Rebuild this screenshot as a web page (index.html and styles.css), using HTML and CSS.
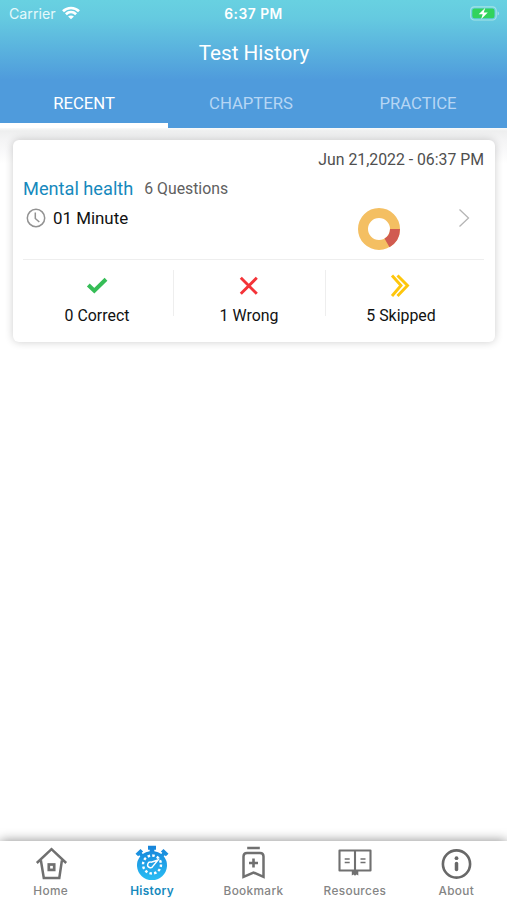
FILE: index.html
```html
<!DOCTYPE html>
<html lang="en">
<head>
<meta charset="utf-8">
<title>Test History</title>
<link rel="stylesheet" href="styles.css">
</head>
<body>
<div class="app">
  <header class="header">
    <div class="status">
      <div class="carrier"><span>Carrier</span>
        <svg width="18" height="14" viewBox="0 0 18 14" fill="none" stroke="#fff" stroke-width="2.700"><path d="M1 5.200C5.500.9 12.500.9 17 5.200M3.900 8.300c3-2.800 7.200-2.800 10.200 0"/><path d="M9 13.300 6.100 10.500C7.800 9 10.200 9 11.900 10.500Z" fill="#fff" stroke="none"/></svg>
      </div>
      <div class="time">6:37 PM</div>
      <svg class="battery" width="30" height="15" viewBox="0 0 30 15"><rect x=".6" y=".8" width="25.600" height="13.200" rx="3.700" fill="none" stroke="#a4e3e6" stroke-width="1.200"/><rect x="2.300" y="2.500" width="22.200" height="9.800" rx="2.200" fill="#32d35c"/><path d="M27.600 5.200v4.400q1.500-.7 1.500-2.200t-1.500-2.200Z" fill="#a4e3e6"/><path d="m15.300 1.800-6.600 6.500h4l-1.600 4.900 6.700-6.700h-4.100Z" fill="#fff"/></svg>
    </div>
    <h1 class="title">Test History</h1>
    <div class="tabs">
      <div class="tab active"><span>RECENT</span></div>
      <div class="tab"><span>CHAPTERS</span></div>
      <div class="tab"><span>PRACTICE</span></div>
    </div>
  </header>
  <main class="content">
    <section class="card">
      <div class="date"><span>Jun 21,2022 - 06:37 PM</span></div>
      <div class="summary">
        <div class="info">
          <div class="subject"><span class="name">Mental health</span><span class="count">6 Questions</span></div>
          <div class="duration"><svg width="20" height="20" viewBox="0 0 20 20" fill="none" stroke="#929292" stroke-width="1.500"><circle cx="10" cy="10" r="8.700"/><path d="M9.300 4.500v6l4 3.500"/></svg><span>01 Minute</span></div>
        </div>
        <svg class="donut" width="42" height="42" viewBox="0 0 42 42" fill="none" stroke-width="10"><circle cx="21" cy="21" r="16" stroke="#f4bf62"/><path d="M37 21A16 16 0 0 1 29 34.860" stroke="#d15b50"/></svg>
        <svg class="chevron" width="12" height="20" viewBox="0 0 12 20" fill="none" stroke="#b5b5b5" stroke-width="1.300"><path d="m1.500 1.500 9 8.500-9 8.500"/></svg>
      </div>
      <div class="results">
        <div class="result"><svg width="24" height="24" viewBox="0 0 24 24" fill="none" stroke="#36bd57" stroke-width="4"><path d="m3.300 11 6 5.700L21 5.300"/></svg><span>0 Correct</span></div>
        <div class="result"><svg width="24" height="24" viewBox="0 0 24 24" fill="none" stroke="#f43338" stroke-width="2.900"><path d="m3.800 3.800 16 16M19.800 3.800l-16 16"/></svg><span>1 Wrong</span></div>
        <div class="result"><svg width="24" height="24" viewBox="0 0 24 24" fill="none" stroke="#fec60c" stroke-width="2.900"><path d="m3 1.500 9 10L3 22M8.500 1.500l10 10-10 10.500"/></svg><span>5 Skipped</span></div>
      </div>
    </section>
  </main>
  <nav class="nav">
    <div class="item"><svg width="36" height="36" viewBox="0 0 36 36" fill="none" stroke="#707070" stroke-width="2.500"><path d="M3.800 18 18.500 4.200 33.200 18M7.900 15.500 10.800 32.900H26.300L28.900 15.500"/><rect x="15.800" y="19.500" width="5.400" height="5.400" stroke-width="2.700"/></svg><span>Home</span></div>
    <div class="item selected"><svg width="36" height="36" viewBox="0 0 36 36"><defs><linearGradient id="watch" x1="0" y1="0" x2="0" y2="1"><stop stop-color="#1683d9"/><stop offset="1" stop-color="#29bdf4"/></linearGradient></defs><path fill="url(#watch)" d="M14 .8h8v4h-1.700v1.500q4 .6 7 2.700l1-1.200-1.400-1.300 2.600-2.500 5 4.800-2.600 2.500-1.200-1.100-1 1.100A15 14.600 0 1 1 6.300 11.300l-1-1.100-1.200 1.100L1.500 8.800l5-4.800 2.600 2.500-1.400 1.300 1 1.200q3-2.100 7-2.700V4.800H14Z"/><circle cx="18" cy="19.500" r="9" fill="none" stroke="#fff" stroke-width="2.400" stroke-dasharray="2.500 2.210"/><path d="m24 15-5 6a2.800 2.800 0 1 1-1.800-3.800Z" fill="none" stroke="#fff" stroke-width="1.400"/></svg><span>History</span></div>
    <div class="item"><svg width="36" height="36" viewBox="0 0 36 36" fill="none" stroke="#707070" stroke-width="2.500"><path d="M12.200 2.900h12.600M8.500 31.800V11.500q0-3.500 3.500-3.500h13q3.500 0 3.500 3.500v20.300L18.500 27.500Z"/><path d="M18.500 13.500v9M14 18h9" stroke-width="2.600"/></svg><span>Bookmark</span></div>
    <div class="item"><svg width="36" height="36" viewBox="0 0 36 36" fill="none" stroke="#707070" stroke-width="2.100"><path d="M18 5.500H2.500v20H33.500v-20H18V26" stroke-linejoin="round"/><path d="M7.700 14h5M7.700 17.500h5M23.500 14h5M23.500 17.500h5" stroke-width="1.600"/><path d="M14.800 26h6.500v4.500l-1.800-1-1.500 1.300-1.500-1.300-1.700 1Z" fill="#707070" stroke="none"/></svg><span>Resources</span></div>
    <div class="item"><svg width="36" height="36" viewBox="0 0 36 36" fill="none" stroke="#686868" stroke-width="2.600"><circle cx="18.500" cy="19" r="13.600"/><path d="M18.500 18.500v6" stroke-width="3.500" stroke-linecap="round"/><circle cx="18.500" cy="13.200" r="1.900" fill="#686868" stroke="none"/></svg><span>About</span></div>
  </nav>
</div>
</body>
</html>
```

FILE: styles.css
```css
* { box-sizing: border-box; }
body { margin: 0; background: #fff; font-family: Roboto, "Liberation Sans", sans-serif; }
svg { display: block; flex: none; }
.app { display: flex; flex-direction: column; width: 507px; height: 900px; overflow: hidden; }
.header { height: 128px; background: linear-gradient(#68d1e1 0, #65cae0 18px, #4f9bdc 80px); color: #fff; }
.status { height: 28px; padding: 0 7px 0 9px; display: grid; grid-template-columns: 1fr auto 1fr; align-items: center; font-family: Inter, sans-serif; line-height: 28px; }
.carrier { display: flex; align-items: center; gap: 6px; color: #e5f9fb; font-size: 14.2px; }
.carrier svg { margin-bottom: 2px; }
.time { font-weight: 600; font-size: 13.8px; letter-spacing: .5px; margin-right: 2px; }
.battery { justify-self: end; margin-bottom: 1px; }
.title { margin: 10px 0 0; height: 30px; text-align: center; font-size: 20.7px; font-weight: 400; line-height: 30px; padding-left: 1px; }
.tabs { display: grid; grid-template-columns: 168px 166px 168px; height: 60px; }
.tab { display: flex; justify-content: center; height: 60px; padding-top: 14px; font-size: 16.7px; line-height: 43px; color: #b6d6f4; }
.tab span { height: 43px; }
.tab.active { color: #fff; border-bottom: 5px solid #fff; }
.content { flex: 1; padding: 12px 12px 0 13px; background: linear-gradient(#f9fafa 0, #eeefef 3px, #f4f4f5 12px, #fff 36px); }
.card { height: 202px; padding: 7px 11px 0 10px; background: #fff; border-radius: 6px; box-shadow: 0 0 8px #0003; }
.date { display: flex; justify-content: flex-end; height: 28px; font-size: 15.8px; line-height: 25px; color: #4f4f4f; }
.summary { display: flex; height: 85px; border-bottom: 1px solid #eee; }
.info { width: 335px; }
.subject { display: flex; gap: 11px; height: 28px; line-height: 27px; }
.name { font-size: 18.2px; color: #1689bd; }
.count { font-size: 15.8px; line-height: 28px; color: #606060; }
.duration { display: flex; align-items: center; gap: 8px; height: 30px; padding-left: 3px; font-size: 16.9px; color: #111; }
.duration span { margin-left: -1px; }
.donut { margin-top: 33px; }
.chevron { margin: 33px 0 0 58px; }
.results { display: grid; grid-template-columns: 151px 152px 1fr; height: 82px; }
.result { display: flex; flex-direction: column; align-items: center; gap: 6px; padding-top: 14px; font-size: 15.9px; line-height: 24px; color: #111; }
.result:first-child { padding-right: 3px; }
.result:nth-child(2) { padding-right: 2px; }
.result:last-child { padding-right: 8px; }
.result:not(:last-child) { background: linear-gradient(#eee, #eee) right 10px / 1px 46px no-repeat; }
.nav { height: 59px; display: grid; grid-template-columns: repeat(5, 1fr); background: #fff; box-shadow: 0 0 11px #0007; padding-top: 4px; }
.item { display: flex; flex-direction: column; align-items: center; gap: 1px; font-family: Inter, sans-serif; font-size: 11.8px; font-weight: 500; line-height: 18px; color: #858585; letter-spacing: .35px; }
.item.selected { color: #1689bd; font-weight: 600; }
```
